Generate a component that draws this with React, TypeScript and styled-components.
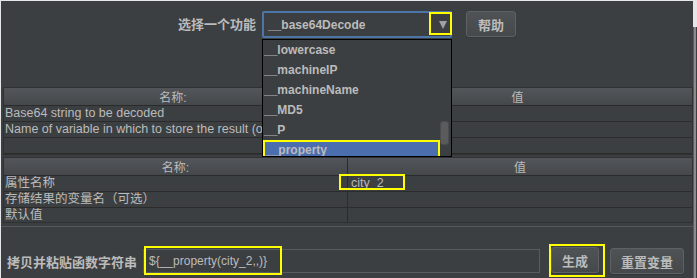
import React from "react";
import styled, { createGlobalStyle } from "styled-components";

const Global = createGlobalStyle`
  html, body { margin: 0; padding: 0; background: #dedede; }
  body { font-family: "Liberation Sans", "Noto Sans CJK SC", sans-serif; }
`;

const CJK = `"Liberation Sans", "Noto Sans CJK SC", sans-serif`;

const Frame = styled.div`
  width: 697px;
  height: 278px;
  display: flex;
  background: #e6e6e6;
  overflow: hidden;
`;

const Dialog = styled.div`
  margin: 1px 0 0 1px;
  width: 692px;
  height: 277px;
  background: #3c3f41;
  display: flex;
  flex-direction: column;
  color: #bbbbbb;
  font-family: ${CJK};
`;

const RightStrip = styled.div`
  flex: 1;
  margin-top: 27px;
  background: linear-gradient(90deg, #5a5d5f 0, #5a5d5f 1px, #8a8a8a 1px, #8a8a8a 3px, #3c3f41 3px);
`;

const TopBar = styled.div`
  height: 86px;
  display: flex;
  align-items: flex-start;
  padding: 10px 0 0 177px;
  box-sizing: border-box;
`;

const FieldLabel = styled.span`
  font-size: 13px;
  font-weight: bold;
  line-height: 27px;
  margin-right: 6px;
  white-space: nowrap;
`;

const ComboWrap = styled.div`
  position: relative;
  width: 190px;
  height: 27px;
  margin-right: 14px;
`;

const Combo = styled.div`
  box-sizing: border-box;
  width: 100%;
  height: 100%;
  border: 2px solid #4c76a8;
  border-radius: 2px;
  background: #3c3f41;
  display: flex;
  align-items: center;
  padding-left: 4px;
  font-size: 12px;
  font-weight: bold;
  color: #bbbbbb;
`;

const Annot = styled.div<{ $l: number; $t: number; $w: number; $h: number }>`
  position: absolute;
  left: ${(p) => p.$l}px;
  top: ${(p) => p.$t}px;
  width: ${(p) => p.$w}px;
  height: ${(p) => p.$h}px;
  border: 2px solid #ffff00;
  box-sizing: border-box;
  pointer-events: none;
  z-index: 5;
`;

const Arrow = styled.div`
  position: absolute;
  right: 5px;
  top: 10px;
  width: 0;
  height: 0;
  border-left: 4.5px solid transparent;
  border-right: 4.5px solid transparent;
  border-top: 8px solid #a0a0a0;
`;

const Popup = styled.div`
  position: absolute;
  left: 0;
  top: 28px;
  width: 190px;
  height: 118px;
  box-sizing: border-box;
  border: 1px solid #000;
  background: #3c3f41;
  display: flex;
  z-index: 4;
  overflow: hidden;
`;

const ItemList = styled.div`
  flex: 1;
  display: flex;
  flex-direction: column;
`;

const Item = styled.div<{ $sel?: boolean }>`
  height: 20px;
  flex: none;
  box-sizing: border-box;
  display: flex;
  align-items: center;
  font-size: 12px;
  font-weight: bold;
  color: #bbbbbb;
  background: ${(p) => (p.$sel ? "#4b6eaf" : "transparent")};
  border: ${(p) => (p.$sel ? "2px solid #ffff00" : "none")};
  padding-left: ${(p) => (p.$sel ? "0px" : "1px")};
  margin-right: ${(p) => (p.$sel ? "-1px" : "0")};
`;

const ScrollCol = styled.div`
  width: 12px;
  position: relative;
`;

const Thumb = styled.div`
  position: absolute;
  left: 1px;
  top: 81px;
  width: 9px;
  height: 24px;
  border-radius: 3px;
  background: #595b5d;
  border: 1px solid #4a4c4e;
  box-sizing: border-box;
`;

const Button = styled.div<{ $w: number }>`
  width: ${(p) => p.$w}px;
  height: 26px;
  box-sizing: border-box;
  border: 1px solid #5e6162;
  border-radius: 3px;
  background: linear-gradient(#4f5355, #45494b);
  display: flex;
  align-items: center;
  justify-content: center;
  font-size: 13px;
  font-weight: bold;
  color: #bbbbbb;
  box-shadow: 0 1px 0 #35383a;
`;

const Table = styled.div<{ $split: number; $h: number }>`
  margin: 0 0 0 2px;
  width: 690px;
  height: ${(p) => p.$h}px;
  box-sizing: border-box;
  border: 1px solid #2f3133;
  display: grid;
  grid-template-columns: ${(p) => p.$split}px 1fr;
  grid-auto-rows: 16px;
  grid-template-rows: 18px;
  overflow: hidden;
  position: relative;
  background: #3c3f41;
`;

const HeadCell = styled.div<{ $last?: boolean }>`
  background: linear-gradient(#52565a, #45484b);
  border-bottom: 1px solid #2b2b2b;
  border-right: ${(p) => (p.$last ? "none" : "1px solid #2b2b2b")};
  box-sizing: border-box;
  display: flex;
  align-items: center;
  justify-content: center;
  font-size: 12px;
  color: #bbbbbb;
`;

const Cell = styled.div<{ $last?: boolean }>`
  border-bottom: 1px solid #2b2b2b;
  border-right: ${(p) => (p.$last ? "none" : "1px solid #2b2b2b")};
  box-sizing: border-box;
  padding-left: 1px;
  font-size: 12.5px;
  line-height: 15px;
  white-space: nowrap;
  overflow: hidden;
  color: #bbbbbb;
  position: relative;
`;

const Clip = styled.span`
  display: inline-block;
  max-width: 258px;
  overflow: hidden;
  vertical-align: top;
`;

const Gap = styled.div<{ $h: number }>`
  height: ${(p) => p.$h}px;
  flex: none;
`;

const Separator = styled.div`
  height: 1px;
  background: #55585a;
  margin-top: 3px;
`;

const BottomBar = styled.div`
  display: flex;
  align-items: center;
  padding: 18px 0 0 6px;
`;

const BottomLabel = styled.span`
  font-size: 13px;
  font-weight: bold;
  margin-right: 6px;
  white-space: nowrap;
`;

const FieldWrap = styled.div`
  position: relative;
  width: 397px;
  height: 24px;
  margin-right: 9px;
`;

const TextField = styled.div`
  width: 100%;
  height: 100%;
  box-sizing: border-box;
  border: 1px solid #595c5e;
  background: #3c3f41;
  display: flex;
  align-items: center;
  padding-left: 5px;
  font-size: 12px;
  color: #bbbbbb;
`;

const HighlightBox = styled.div`
  border: 2px solid #ffff00;
  padding: 1px 4px 2px 0;
  margin-right: 5px;
  margin-top: -1px;
`;

const Value = styled.span`
  padding-left: 2px;
`;

export default function App() {
  const items = ["__lowercase", "__machineIP", "__machineName", "__MD5", "__P"];
  return (
    <Frame>
      <Global />
      <Dialog>
        <TopBar>
          <FieldLabel>选择一个功能</FieldLabel>
          <ComboWrap>
            <Combo>__base64Decode</Combo>
            <Arrow />
            <Annot $l={167} $t={1} $w={23} $h={23} />
            <Popup>
              <ItemList>
                {items.map((t) => (
                  <Item key={t}>{t}</Item>
                ))}
                <Item $sel>__property</Item>
              </ItemList>
              <ScrollCol>
                <Thumb />
              </ScrollCol>
            </Popup>
          </ComboWrap>
          <Button $w={50}>帮助</Button>
        </TopBar>
        <Table $split={339} $h={68}>
          <HeadCell>名称:</HeadCell>
          <HeadCell $last>值</HeadCell>
          <Cell>Base64 string to be decoded</Cell>
          <Cell $last />
          <Cell>
            <Clip>Name of variable in which to store the result (optional)</Clip>
          </Cell>
          <Cell $last />
          <Cell />
          <Cell $last />
        </Table>
        <Gap $h={2} />
        <Table $split={344} $h={66}>
          <HeadCell>名称:</HeadCell>
          <HeadCell $last>值</HeadCell>
          <Cell>属性名称</Cell>
          <Cell $last>
            <Value>city_2</Value>
          </Cell>
          <Cell>存储结果的变量名（可选）</Cell>
          <Cell $last />
          <Cell>默认值</Cell>
          <Cell $last />
          <Annot $l={335} $t={16} $w={66} $h={16} />
        </Table>
        <Separator />
        <BottomBar>
          <BottomLabel>拷贝并粘贴函数字符串</BottomLabel>
          <FieldWrap>
            <TextField>{"${__property(city_2,,)}"}</TextField>
            <Annot $l={1} $t={-3} $w={138} $h={29} />
          </FieldWrap>
          <HighlightBox>
            <Button $w={48}>生成</Button>
          </HighlightBox>
          <Button $w={74}>重置变量</Button>
        </BottomBar>
      </Dialog>
      <RightStrip />
    </Frame>
  );
}
